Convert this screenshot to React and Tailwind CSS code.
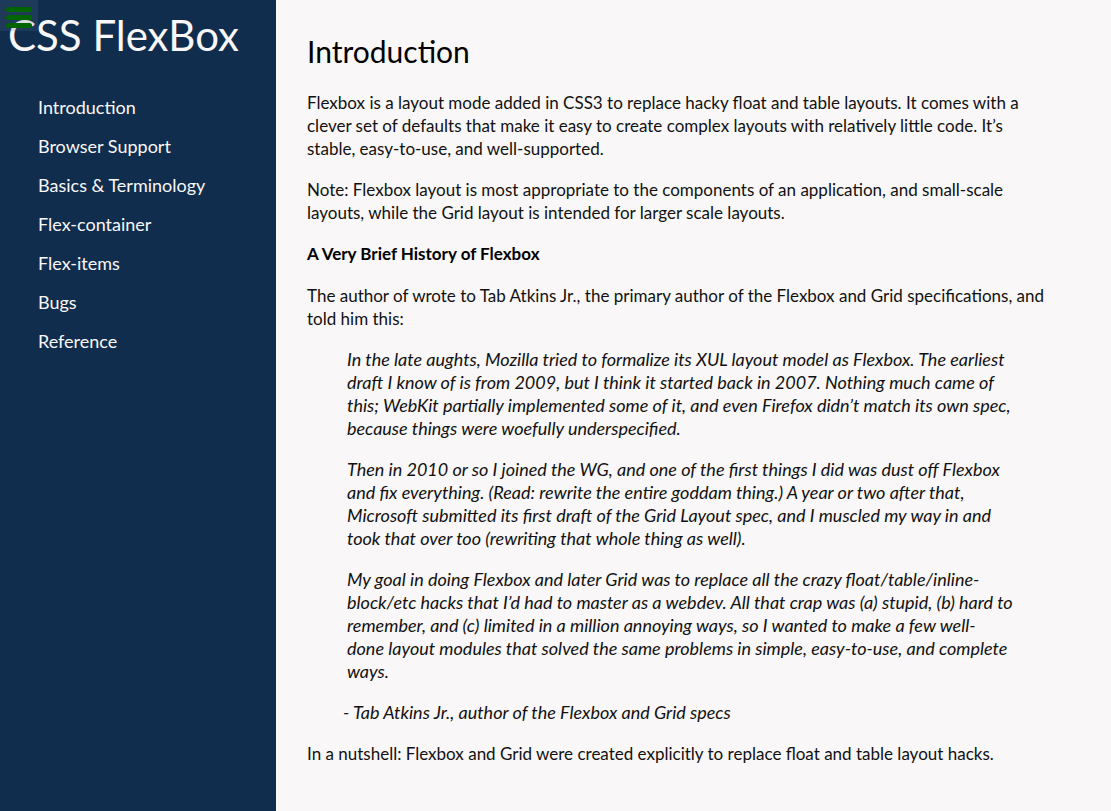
const links = [
  "Introduction",
  "Browser Support",
  "Basics & Terminology",
  "Flex-container",
  "Flex-items",
  "Bugs",
  "Reference",
];

function Sidebar() {
  return (
    <aside className="relative w-[276px] shrink-0 bg-[#112d4e] text-[#f9f7f7]">
      <h1 className="px-2 pt-[11px] text-[42px] leading-[48px] whitespace-nowrap">CSS FlexBox</h1>
      <button
        type="button"
        aria-label="Toggle menu"
        className="absolute top-0 left-0 flex h-[31px] w-[38px] flex-col items-center gap-[3px] bg-[#5c6e80]/20 pt-[7px]"
      >
        <span className="h-[5px] w-[26px] shrink-0 rounded-full bg-[#006400]" />
        <span className="h-[5px] w-[26px] shrink-0 rounded-full bg-[#006400]" />
        <span className="h-[5px] w-[26px] shrink-0 rounded-full bg-[#006400]" />
      </button>
      <nav className="pt-[29px] pl-[38px]">
        <ul>
          {links.map((label) => (
            <li key={label} className="text-[18px] leading-[39px] whitespace-nowrap">
              <a href={"#" + label.replace(/[^A-Za-z]+/g, "-")}>{label}</a>
            </li>
          ))}
        </ul>
      </nav>
    </aside>
  );
}

export default function App() {
  return (
    <div className="flex min-h-screen bg-[#f9f7f7] font-['Lato',sans-serif] text-[#111111]">
      <Sidebar />
      <main className="min-w-0 flex-1 px-[31px] pt-[31px] pb-8 text-[17px] leading-[23px]">
        <h2 className="mb-[19px] text-[30px] leading-[41px] text-black">Introduction</h2>
        <div className="flex flex-col gap-[18px]">
          <p>
            Flexbox is a layout mode added in CSS3 to replace hacky float and table layouts. It comes with a
            <br />
            clever set of defaults that make it easy to create complex layouts with relatively little code. It’s
            <br />
            stable, easy-to-use, and well-supported.
          </p>
          <p>
            Note: Flexbox layout is most appropriate to the components of an application, and small-scale
            <br />
            layouts, while the Grid layout is intended for larger scale layouts.
          </p>
          <h3 className="leading-6 font-bold text-black">A Very Brief History of Flexbox</h3>
          <p>
            The author of wrote to Tab Atkins Jr., the primary author of the Flexbox and Grid specifications, and
            <br />
            told him this:
          </p>
          <blockquote className="flex flex-col gap-[18px] pl-10 text-[18px] leading-[23px] italic">
            <p>
              In the late aughts, Mozilla tried to formalize its XUL layout model as Flexbox. The earliest
              <br />
              draft I know of is from 2009, but I think it started back in 2007. Nothing much came of
              <br />
              this; WebKit partially implemented some of it, and even Firefox didn’t match its own spec,
              <br />
              because things were woefully underspecified.
            </p>
            <p>
              Then in 2010 or so I joined the WG, and one of the first things I did was dust off Flexbox
              <br />
              and fix everything. (Read: rewrite the entire goddam thing.) A year or two after that,
              <br />
              Microsoft submitted its first draft of the Grid Layout spec, and I muscled my way in and
              <br />
              took that over too (rewriting that whole thing as well).
            </p>
            <p>
              My goal in doing Flexbox and later Grid was to replace all the crazy float/table/inline-
              <br />
              block/etc hacks that I’d had to master as a webdev. All that crap was (a) stupid, (b) hard to
              <br />
              remember, and (c) limited in a million annoying ways, so I wanted to make a few well-
              <br />
              done layout modules that solved the same problems in simple, easy-to-use, and complete
              <br />
              ways.
            </p>
          </blockquote>
          <p className="pl-9 text-[18px] leading-[23px] italic">- Tab Atkins Jr., author of the Flexbox and Grid specs</p>
          <p>In a nutshell: Flexbox and Grid were created explicitly to replace float and table layout hacks.</p>
        </div>
      </main>
    </div>
  );
}
